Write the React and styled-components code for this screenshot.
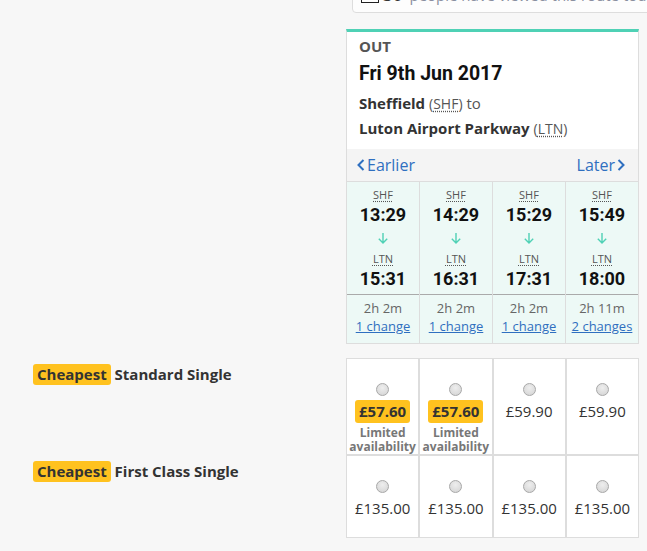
import React from "react";
import styled, { createGlobalStyle } from "styled-components";

const COLORS = {
  page: "#f7f7f7",
  border: "#dddddd",
  text: "#333333",
  muted: "#666666",
  teal: "#4fd1b5",
  mint: "#edf9f6",
  navBg: "#f4f4f4",
  link: "#2f6fc0",
  yellow: "#ffc21f"
};

const JOURNEYS = [
  { dep: "13:29", arr: "15:31", duration: "2h 2m", changes: "1 change" },
  { dep: "14:29", arr: "16:31", duration: "2h 2m", changes: "1 change" },
  { dep: "15:29", arr: "17:31", duration: "2h 2m", changes: "1 change" },
  { dep: "15:49", arr: "18:00", duration: "2h 11m", changes: "2 changes" }
];

const FARES = [
  {
    name: "Standard Single",
    tall: true,
    prices: [
      { value: "£57.60", cheapest: true },
      { value: "£57.60", cheapest: true },
      { value: "£59.90" },
      { value: "£59.90" }
    ]
  },
  {
    name: "First Class Single",
    prices: [
      { value: "£135.00" },
      { value: "£135.00" },
      { value: "£135.00" },
      { value: "£135.00" }
    ]
  }
];

const GlobalStyle = createGlobalStyle`
  body {
    margin: 0;
    background: ${COLORS.page};
    font-family: "Open Sans", "Liberation Sans", sans-serif;
    color: ${COLORS.text};
    overflow: hidden;
  }
`;

const Chevron = ({ dir }) => (
  <svg width="8" height="12" viewBox="0 0 8 12" aria-hidden="true">
    <path
      d={dir === "left" ? "M6.5 1 L1.5 6 L6.5 11" : "M1.5 1 L6.5 6 L1.5 11"}
      fill="none"
      stroke="currentColor"
      strokeWidth="2"
    />
  </svg>
);

const DownArrow = () => (
  <svg width="12" height="12" viewBox="0 0 12 12" aria-hidden="true">
    <path
      d="M6 1 V11 M1.8 6.8 L6 11 L10.2 6.8"
      fill="none"
      stroke={COLORS.teal}
      strokeWidth="1.4"
    />
  </svg>
);

const App = () => {
  return (
    <>
      <GlobalStyle />
      <Page>
        <NoticeRow>
          <Notice>
            <Checkbox />
            <strong>30</strong>
            <NoticeText>people have viewed this route today</NoticeText>
          </Notice>
        </NoticeRow>

        <TwoCol>
          <span />
          <Card>
            <Header>
              <Direction>OUT</Direction>
              <DateLine>Fri 9th Jun 2017</DateLine>
              <Station>
                Sheffield <Code>(<abbr>SHF</abbr>)</Code> <Plain>to</Plain>
              </Station>
              <Station>
                Luton Airport Parkway <Code>(<abbr>LTN</abbr>)</Code>
              </Station>
            </Header>
            <Nav>
              <NavLink>
                <Chevron dir="left" />
                Earlier
              </NavLink>
              <NavLink>
                Later
                <Chevron dir="right" />
              </NavLink>
            </Nav>
            <Columns>
              {JOURNEYS.map((j) => (
                <Column key={j.dep}>
                  <Times>
                    <StationCode>SHF</StationCode>
                    <Time>{j.dep}</Time>
                    <ArrowWrap>
                      <DownArrow />
                    </ArrowWrap>
                    <StationCode>LTN</StationCode>
                    <Time>{j.arr}</Time>
                  </Times>
                  <Summary>
                    <Duration>{j.duration}</Duration>
                    <ChangeLink>{j.changes}</ChangeLink>
                  </Summary>
                </Column>
              ))}
            </Columns>
          </Card>
        </TwoCol>

        <Fares>
          {FARES.map((fare) => (
            <TwoCol key={fare.name}>
              <FareLabel>
                <Badge>Cheapest</Badge> {fare.name}
              </FareLabel>
              <Cells>
                {fare.prices.map((p, i) => (
                  <Cell key={i} $tall={fare.tall}>
                    <Radio />
                    {p.cheapest ? (
                      <>
                        <PriceBadge>{p.value}</PriceBadge>
                        <Limited>
                          <div>Limited</div>
                          <div>availability</div>
                        </Limited>
                      </>
                    ) : (
                      <Price>{p.value}</Price>
                    )}
                  </Cell>
                ))}
              </Cells>
            </TwoCol>
          ))}
        </Fares>

        <AllTickets>View all ticket types</AllTickets>
      </Page>
    </>
  );
};

const Page = styled.div`
  padding: 0 8px 0 33px;
`;

const NoticeRow = styled.div`
  display: flex;
  justify-content: flex-end;
  margin-right: -40px;
  margin-top: -26px;
`;

const Notice = styled.div`
  box-sizing: border-box;
  width: 327px;
  height: 39px;
  padding: 10px 8px 0;
  display: flex;
  align-items: flex-start;
  gap: 4px;
  background: #fdfdfd;
  border: 1px solid ${COLORS.border};
  border-radius: 0 0 4px 4px;
  font-size: 15px;
  line-height: 20px;
  white-space: nowrap;

  strong {
    font-weight: 700;
    font-size: 17px;
    color: ${COLORS.text};
  }
`;

const Checkbox = styled.span`
  width: 18px;
  height: 18px;
  border: 1.5px solid #222;
  box-sizing: border-box;
  background: #fff;
`;

const NoticeText = styled.span`
  margin-left: 3px;
  color: #8a8fa0;
`;

const TwoCol = styled.div`
  display: grid;
  grid-template-columns: 1fr 293px;
`;

const Card = styled.div`
  margin-top: 16px;
  background: #fff;
  border: 1px solid ${COLORS.border};
  border-top: 3px solid ${COLORS.teal};
`;

const Header = styled.div`
  padding: 4px 12px 8px;
`;

const Direction = styled.div`
  font-size: 15px;
  line-height: 20px;
  font-weight: 700;
  color: #555;
`;

const DateLine = styled.div`
  margin-top: 6px;
  font-family: Roboto, "Liberation Sans", sans-serif;
  font-size: 19.5px;
  line-height: 24px;
  font-weight: 700;
  color: #111;
`;

const Station = styled.div`
  margin-top: 5px;
  font-size: 15px;
  line-height: 24px;
  font-weight: 700;
  color: ${COLORS.text};

  & + & {
    margin-top: 0;
  }
`;

const Code = styled.span`
  font-weight: 400;
  font-size: 14px;
  color: #555;

  abbr {
    text-decoration: underline dotted;
    text-underline-offset: 2px;
  }
`;

const Plain = styled.span`
  font-weight: 400;
  color: #555;
`;

const Nav = styled.div`
  height: 32px;
  padding: 0 13px 0 10px;
  display: flex;
  align-items: center;
  justify-content: space-between;
  background: ${COLORS.navBg};
`;

const NavLink = styled.a`
  display: flex;
  align-items: center;
  gap: 2px;
  font-size: 16px;
  line-height: 20px;
  color: ${COLORS.link};
  cursor: pointer;
`;

const Columns = styled.div`
  display: grid;
  grid-template-columns: repeat(4, 1fr);
  gap: 1px;
  background: ${COLORS.border};
  border-top: 1px solid ${COLORS.border};
`;

const Column = styled.div`
  background: ${COLORS.mint};
  text-align: center;
`;

const Times = styled.div`
  padding: 6px 0 3px;
  display: flex;
  flex-direction: column;
  align-items: center;
`;

const StationCode = styled.abbr`
  font-size: 11px;
  line-height: 14px;
  color: #555;
  text-decoration: underline dotted;
  text-underline-offset: 2px;
`;

const Time = styled.div`
  margin-top: 2px;
  margin-bottom: 1px;
  font-family: Roboto, "Liberation Sans", sans-serif;
  font-size: 18px;
  line-height: 22px;
  font-weight: 700;
  color: #111;
`;

const ArrowWrap = styled.div`
  height: 14px;
  margin: 4px 0 7px;
  display: flex;
  align-items: center;
`;

const Summary = styled.div`
  padding: 4px 0 8px;
  border-top: 1px solid #aaa;
  font-size: 13px;
  line-height: 18px;
`;

const Duration = styled.div`
  color: ${COLORS.muted};
`;

const ChangeLink = styled.a`
  color: ${COLORS.link};
  text-decoration: underline;
  cursor: pointer;
`;

const Fares = styled.div`
  margin-top: 14px;
`;

const FareLabel = styled.div`
  padding-top: 6px;
  font-size: 15px;
  line-height: 21px;
  font-weight: 700;
  color: ${COLORS.text};
`;

const Badge = styled.span`
  display: inline-block;
  padding: 0 4px;
  border-radius: 3px;
  background: ${COLORS.yellow};
`;

const Cells = styled.div`
  display: grid;
  grid-template-columns: repeat(4, 1fr);
`;

const Cell = styled.div`
  box-sizing: border-box;
  height: ${(p) => (p.$tall ? "97px" : "83px")};
  padding-top: 24px;
  display: flex;
  flex-direction: column;
  align-items: center;
  gap: 4px;
  background: #fff;
  border: 1px solid ${COLORS.border};
`;

const Radio = styled.span`
  width: 13px;
  height: 13px;
  box-sizing: border-box;
  border-radius: 50%;
  border: 1px solid #a8a8a8;
  background: radial-gradient(circle at 50% 35%, #eeeeee, #d2d2d2);
  flex-shrink: 0;
`;

const PriceBadge = styled.span`
  padding: 0 4px;
  border-radius: 3px;
  background: ${COLORS.yellow};
  font-size: 15px;
  line-height: 23px;
  font-weight: 700;
  color: ${COLORS.text};
`;

const Limited = styled.div`
  margin-top: -1px;
  font-size: 12px;
  line-height: 14px;
  font-weight: 700;
  color: #777;
  text-align: center;
  white-space: nowrap;
`;

const Price = styled.div`
  font-size: 15px;
  line-height: 22px;
  color: ${COLORS.text};
`;

const AllTickets = styled.a`
  display: block;
  margin-top: 9px;
  font-size: 14px;
  line-height: 20px;
  color: ${COLORS.link};
  text-decoration: underline;
`;

export default App;
